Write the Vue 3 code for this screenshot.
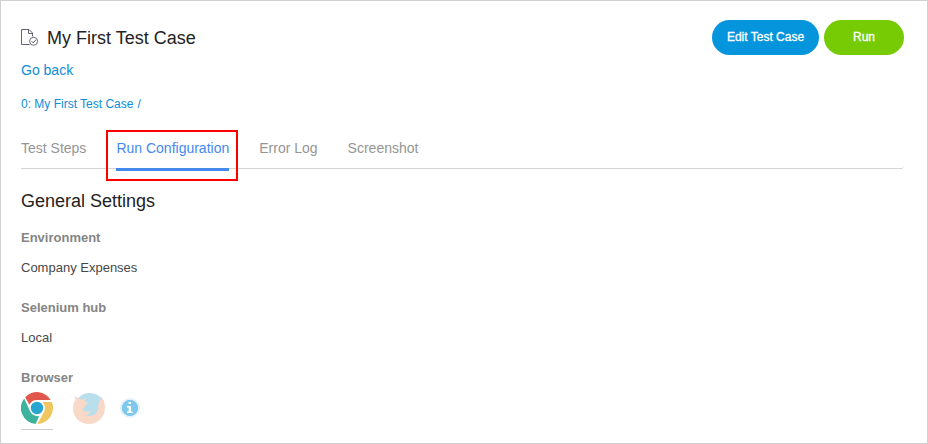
<script setup>
const tabs = [
  { label: 'Test Steps' },
  { label: 'Run Configuration', active: true },
  { label: 'Error Log' },
  { label: 'Screenshot' }
]
const settings = [
  { label: 'Environment', value: 'Company Expenses' },
  { label: 'Selenium hub', value: 'Local' }
]
</script>

<template>
  <main class="page">
    <header class="header">
      <div class="heading">
        <svg class="case-icon" width="18" height="18" viewBox="0 0 18 18" fill="none">
          <path d="M8.500 15.500H.5V.5H8l3.500 3.500v3.500M7.500.5v4h4" stroke="#626570" />
          <circle cx="12.600" cy="12.300" r="4" fill="#fff" stroke="#686b72" />
          <path d="M10.600 12.200l1.600 1.700 2.700-3.200" stroke="#555960" />
        </svg>
        <h1 class="title">My First Test Case</h1>
      </div>
      <div class="actions">
        <button class="btn edit">Edit Test Case</button>
        <button class="btn run">Run</button>
      </div>
    </header>
    <a class="back">Go back</a>
    <nav class="crumbs"><a>0: My First Test Case</a><span>/</span></nav>

    <nav class="tabs">
      <a v-for="tab in tabs" :key="tab.label" class="tab" :class="{ active: tab.active }">{{ tab.label }}</a>
    </nav>

    <section class="settings">
      <h2 class="subtitle">General Settings</h2>
      <div v-for="item in settings" :key="item.label" class="setting">
        <h3 class="label">{{ item.label }}</h3>
        <p class="value">{{ item.value }}</p>
      </div>
      <h3 class="label">Browser</h3>
      <div class="browsers">
        <div class="browser selected">
          <svg width="32" height="32" viewBox="0 0 32 32">
            <path d="M4.200 5.200A16 16 0 0 1 29.700 8H16A8 8 0 0 0 8.400 12.800z" fill="#e2574c" />
            <path d="M3.200 6.400 9.200 19.500A8 8 0 0 0 18.300 23.900L14.600 32A16 16 0 0 1 3.200 6.400z" fill="#3db39e" />
            <path d="M21.200 9.900H30.800A16 16 0 0 1 16.300 32L22.900 20.200A8 8 0 0 0 21.200 9.900z" fill="#efc75e" />
            <circle cx="16" cy="16" r="6.200" fill="#26a6d1" />
          </svg>
        </div>
        <div class="browser">
          <svg width="32" height="32" viewBox="0 0 32 32">
            <path d="M5 6.500C8 2.800 12 1 16.500 1 23.500 1 29 5 31 10L28 24 12 27z" fill="#b9dfed" />
            <path d="M2.800 3.500c.6 1.700 1.500 2.600 2.800 3.300 1.600-.3 3 .1 4.200 1.200 1-1 2-1.700 3.500-1.900-1.100 1.300-1.500 2.500-1.200 3.800l2.900.9c-.2 1.500-1.800 2.200-3.100 3.100l.2 2.100c-1.200-.4-2.100-.2-2.700.4.300 2 1.800 3.300 4 3.300 1.500 0 2.600-.9 4-.4-.5 2.200-2.300 3.600-4.700 3.900 5.300 2 10.600-.2 12.200-4.900.7-2 .5-3.900.1-5.400 1.500-1.700 1.900-4 1.100-6.500 1 .6 1.800 1.500 2.300 2.700.1-1.700-.2-3.300-.9-4.800C30.600 6.500 32 11 32 15.800 32 25 25 32 16 32S0 25.200 0 16.500C0 13 1 10 2.500 8 2 6.500 2.100 4.900 2.800 3.500z" fill="#f8d9c7" />
          </svg>
        </div>
        <svg class="info" width="20" height="20" viewBox="0 0 20 20">
          <circle cx="10" cy="10" r="9.300" fill="#fff" stroke="#d5edf8" />
          <circle cx="10" cy="10" r="8.300" fill="#7fc8ee" />
          <path d="M8.700 4h2.300v2H8.700zM7 8h4v5.500h1.500V15H7v-1.500h1.700v-4H7z" fill="#fff" />
        </svg>
      </div>
    </section>
  </main>
</template>

<style>
body { margin: 0; }
</style>

<style scoped>
.page {
  box-sizing: border-box;
  width: 928px;
  height: 444px;
  padding: 19px 23px 0 20px;
  border: 1px solid #d0d0d0;
  background: #fff;
  font-family: "Liberation Sans", Arial, sans-serif;
  overflow: hidden;
}
h1, h2, h3, p { margin: 0; font-weight: 400; }
.header { display: flex; justify-content: space-between; height: 35px; }
.heading { display: flex; align-items: center; gap: 8px; }
.title, .subtitle { font-size: 18px; line-height: 22px; color: #222; }
.actions { display: flex; gap: 5px; }
.btn {
  height: 35px;
  padding: 0 0 1px;
  border: 0;
  border-radius: 18px;
  color: #fff;
  font: 12px "Liberation Sans", Arial, sans-serif;
  -webkit-text-stroke: 0.3px #fff;
}
.edit { width: 107px; background: #0595dd; }
.run { width: 80px; background: #76cb04; }
.back { display: block; margin-top: 5px; font-size: 14px; line-height: 20px; color: #0d8ed8; }
.crumbs {
  display: flex;
  gap: 4px;
  margin-top: 14px;
  font-size: 12px;
  line-height: 20px;
  color: #0d8ed8;
}
.tabs {
  display: flex;
  gap: 30px;
  height: 30px;
  margin-top: 24px;
  border-bottom: 1px solid #d4d4d4;
  border-bottom-right-radius: 3px;
}
.tab { height: 30px; font-size: 14px; line-height: 20px; color: #959595; }
.tab.active {
  position: relative;
  color: #4489ee;
  border-bottom: 3px solid #4489ee;
}
.tab.active::after {
  content: "";
  position: absolute;
  inset: -8px -9px -13px -10px;
  border: 2px solid #ff0000;
}
.subtitle { margin: 21px 0 16px; }
.label { font-size: 13px; font-weight: 700; line-height: 20px; color: #858585; }
.setting { height: 70px; }
.value { margin-top: 10px; font-size: 13px; line-height: 20px; color: #484848; }
.browsers { display: flex; align-items: flex-start; margin-top: 4px; }
.browser { height: 37px; margin-right: 20px; border-bottom: 1px solid transparent; }
.browser svg { display: block; }
.selected { border-color: #ccc; }
.info { margin: 6px 0 0 -5px; }
</style>
